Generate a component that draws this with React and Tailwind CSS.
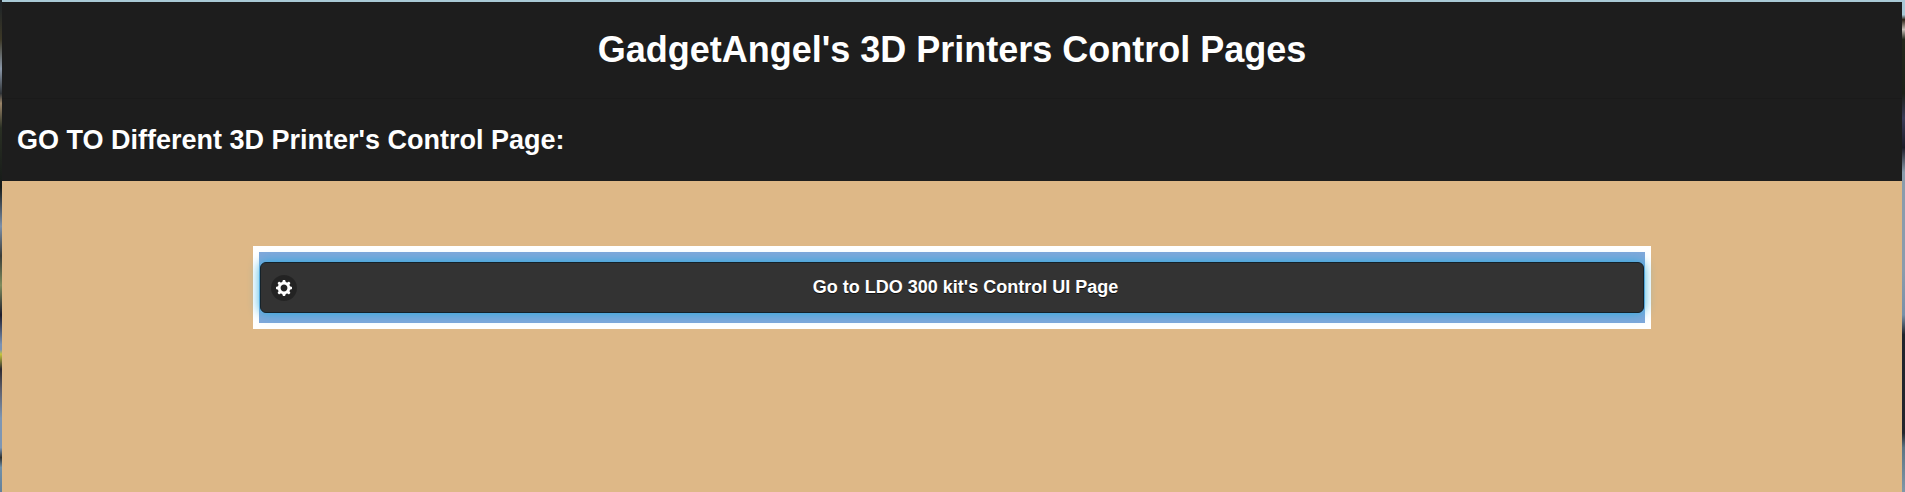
function GearIcon() {
  return (
    <svg viewBox="0 0 14 14" className="size-4" fill="currentColor" aria-hidden="true">
      <path
        fillRule="evenodd"
        d="M13.621,5.904l-1.036-0.259c-0.168-0.042-0.303-0.168-0.355-0.332c-0.092-0.284-0.205-0.559-0.339-0.82c-0.079-0.153-0.073-0.337,0.017-0.486l0.549-0.915c0.118-0.196,0.088-0.448-0.075-0.61l-0.862-0.863c-0.162-0.163-0.414-0.193-0.611-0.075l-0.916,0.55C9.844,2.182,9.659,2.188,9.506,2.109C9.244,1.975,8.97,1.861,8.686,1.77c-0.165-0.052-0.29-0.187-0.332-0.354L8.095,0.379C8.039,0.156,7.839,0,7.609,0H6.391c-0.229,0-0.43,0.156-0.485,0.379L5.646,1.415C5.604,1.582,5.479,1.718,5.313,1.77c-0.284,0.092-0.559,0.206-0.82,0.34C4.339,2.188,4.155,2.182,4.007,2.093L3.092,1.544c-0.196-0.118-0.448-0.087-0.61,0.075L1.619,2.481C1.457,2.644,1.426,2.896,1.544,3.093l0.549,0.914c0.089,0.148,0.095,0.332,0.017,0.486C1.975,4.755,1.861,5.029,1.77,5.314c-0.053,0.164-0.188,0.29-0.354,0.332L0.379,5.905C0.156,5.961,0,6.161,0,6.391v1.219c0,0.229,0.156,0.43,0.379,0.485l1.036,0.26C1.582,8.396,1.717,8.521,1.77,8.687c0.092,0.284,0.205,0.559,0.34,0.82C2.188,9.66,2.182,9.844,2.093,9.993l-0.549,0.915c-0.118,0.195-0.087,0.448,0.075,0.61l0.862,0.862c0.162,0.163,0.414,0.193,0.61,0.075l0.915-0.549c0.148-0.089,0.332-0.095,0.486-0.017c0.262,0.135,0.536,0.248,0.82,0.34c0.165,0.053,0.291,0.187,0.332,0.354l0.259,1.036C5.96,13.844,6.16,14,6.39,14h1.22c0.229,0,0.429-0.156,0.485-0.379l0.259-1.036c0.042-0.167,0.168-0.302,0.333-0.354c0.284-0.092,0.559-0.205,0.82-0.34c0.154-0.078,0.338-0.072,0.486,0.017l0.914,0.549c0.197,0.118,0.449,0.088,0.611-0.074l0.862-0.863c0.163-0.162,0.193-0.415,0.075-0.611l-0.549-0.915c-0.089-0.148-0.096-0.332-0.017-0.485c0.134-0.263,0.248-0.536,0.339-0.82c0.053-0.165,0.188-0.291,0.355-0.333l1.036-0.259C13.844,8.039,14,7.839,14,7.609V6.39C14,6.16,13.844,5.96,13.621,5.904z M7,10c-1.657,0-3-1.343-3-3s1.343-3,3-3s3,1.343,3,3S8.657,10,7,10z"
      />
    </svg>
  );
}

function LeftEdge() {
  return (
    <div className="w-[2px] shrink-0 bg-[linear-gradient(#1c2228_0%,#3c3826_8%,#8a97a8_14%,#303438_19%,#9a8468_21%,#2a3024_26%,#161a18_38%,#7c8fa8_46%,#3a3c38_52%,#7f8c5c_58%,#1c1c2c_64%,#7a92b4_70%,#7a92b4_71%,#c4c43c_72%,#2c2a30_75%,#5c5c68_79%,#7d96b4_85%,#7d96b4_91%,#2c3030_93%,#7090a8_95%,#64809c_100%)]" />
  );
}

function RightEdge() {
  return (
    <div className="w-[3px] shrink-0 bg-[linear-gradient(#a9c9d6_0%,#a9c9d6_3%,#2c2418_4%,#c8c0b8_6%,#24281c_8%,#1c2018_19%,#3a3c58_24%,#1c1c28_30%,#8a9cac_35%,#8a9cac_55%,#7890a8_64%,#20242c_68%,#24262c_88%,#5c7484_91%,#8098a8_100%)]" />
  );
}

export default function App() {
  return (
    <div className="flex min-h-screen bg-[#a9c9d6] font-['Liberation_Sans',Arial,sans-serif] text-white">
      <LeftEdge />
      <div className="flex grow flex-col pt-[2px]">
        <header className="bg-[#1d1d1d] px-4 py-6 text-center">
          <h1 className="text-[36px] leading-[48px] font-bold">GadgetAngel's 3D Printers Control Pages</h1>
        </header>
        <div className="border-t border-[#1a1a1a] bg-[#1d1d1d] px-[15px] py-[22px]">
          <h2 className="text-[27px] leading-[38px] font-bold">GO TO Different 3D Printer's Control Page:</h2>
        </div>
        <main className="grow bg-[#deb887] pt-[65px]">
          <div className="mx-auto w-[73.6%] border-6 border-white bg-[#80a8da] px-px py-[10px]">
            <a
              href="#ldo-300"
              className="relative flex h-[51px] items-center justify-center rounded-[6px] border border-[#14222a] bg-[#333333] pr-[18px] pb-[2px] pl-[45px] text-[18px] leading-6 font-bold shadow-[0_0_12px_#22aadd] [text-shadow:0_1px_0_#111111]"
            >
              <span className="absolute inset-y-0 left-[10px] flex items-center">
                <span className="flex size-[26px] items-center justify-center rounded-full bg-black/30">
                  <GearIcon />
                </span>
              </span>
              Go to LDO 300 kit's Control UI Page
            </a>
          </div>
        </main>
      </div>
      <RightEdge />
    </div>
  );
}
